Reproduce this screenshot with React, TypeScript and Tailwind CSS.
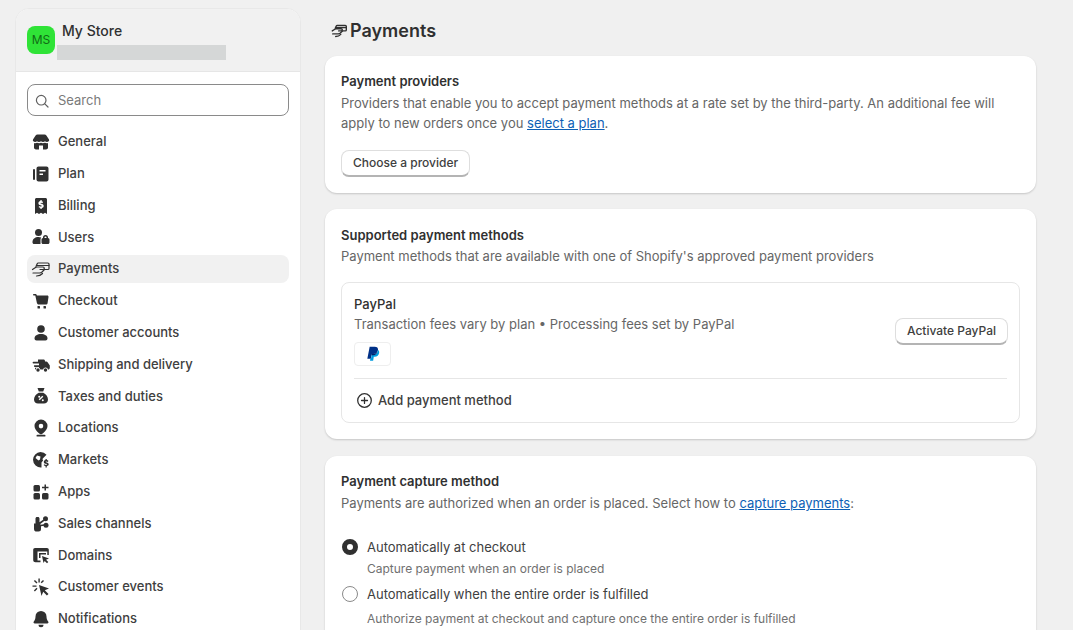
import React from "react";

const ico = "w-5 h-5 shrink-0 text-[#303030] fill-current";

function Store() {
  return (
    <svg viewBox="0 0 20 20" className={ico}>
      <path d="M6.500 2.500h7c.8 0 1.500.4 1.900 1.100L18 7.500c.3.600.2 1.300-.3 1.700-1 .9-2.600.9-3.700.1-1 .8-2.800.9-4 0-1.200.9-3 .8-4 0-1.100.8-2.700.8-3.700-.1-.5-.4-.6-1.100-.3-1.700l2.600-3.900c.4-.7 1.100-1.100 1.900-1.100Z" />
      <path fillRule="evenodd" d="M3 11c1 .3 2.100.2 3-.3 1.200.6 2.800.7 4 .1 1.200.6 2.800.5 4-.1.900.5 2 .6 3 .3v4.500c0 1.100-.9 2-2 2H5c-1.100 0-2-.9-2-2V11Zm5 2.500v4h4v-4H8Z" />
    </svg>
  );
}

function Plan() {
  return (
    <svg viewBox="0 0 20 20" className={ico}>
      <rect x="2" y="5" width="2" height="11" rx="1" />
      <path fillRule="evenodd" d="M7.500 2.500h8c1.100 0 2 .9 2 2v11c0 1.100-.9 2-2 2h-8c-1.100 0-2-.9-2-2v-11c0-1.100.9-2 2-2Zm1 3.500v1.500h6V6h-6Zm0 3.500V11h3.500V9.500H8.500Z" />
    </svg>
  );
}

function Billing() {
  return (
    <svg viewBox="0 0 20 20" className={ico}>
      <path fillRule="evenodd" d="M5.500 2h9C15.300 2 16 2.700 16 3.500V18l-2-1.300-2 1.300-2-1.300L8 18l-2-1.300L4 18V3.500C4 2.700 4.700 2 5.500 2Zm3.900 2v1C8.200 5.300 7.400 6.100 7.400 7.200c0 1.300 1 1.800 2.100 2.100.9.200 1.200.4 1.200.7 0 .4-.4.600-.8.600-.5 0-1-.2-1.400-.6l-1 1.100c.5.500 1.200.8 1.900 1v1h1.300v-1c1.200-.2 2-1 2-2.100 0-1.400-1.100-1.900-2.200-2.200-.8-.2-1.100-.3-1.100-.6 0-.3.300-.5.700-.5.400 0 .8.200 1.200.5l.9-1.100c-.5-.4-1-.7-1.500-.8V4H9.400Z" />
    </svg>
  );
}

function Users() {
  return (
    <svg viewBox="0 0 20 20" className={ico}>
      <circle cx="7.500" cy="5.500" r="3.500" />
      <path d="M1.500 15c0-3 2.500-5 6-5 1 0 1.900.2 2.700.5-.4.600-.7 1.300-.7 2.100V17H3c-.8 0-1.500-.7-1.500-1.500V15Z" />
      <path fillRule="evenodd" d="M12 11v-.5a2.500 2.500 0 0 1 5 0v.5c.8.100 1.500.8 1.500 1.700v2.800c0 .9-.7 1.500-1.500 1.500h-5c-.8 0-1.500-.6-1.500-1.500v-2.800c0-.9.700-1.600 1.500-1.700Zm1.500 0h2v-.5a1 1 0 0 0-2 0v.5Z" />
    </svg>
  );
}

function Payments({ className = "w-5 h-5 shrink-0 text-[#303030]", strokeWidth = 1.2 }: { className?: string; strokeWidth?: number }) {
  return (
    <svg viewBox="0 0 20 20" className={className} fill="none" stroke="currentColor" strokeWidth={strokeWidth} strokeLinecap="round" strokeLinejoin="round">
      <path d="M5 7.500 6.200 4.700c.2-.4.500-.7 1-.7h9.600c.7 0 1.200.5 1.200 1.100v4.300c0 .6-.5 1.100-1.200 1.100H14" />
      <path d="M6 6.500h12" />
      <path d="M1.500 10.500 4.500 8.500c.5-.3 1-.5 1.500-.5h6c.8 0 1.300.5 1.300 1.200s-.5 1.300-1.300 1.300H9" />
      <path d="M2 14h6.500c1 0 1.800-.4 2.500-1l2.500-2.500" />
      <path d="M5.500 17c2.500 0 4.500-.8 6-2.500" />
    </svg>
  );
}

function Cart() {
  return (
    <svg viewBox="0 0 20 20" className={ico}>
      <path d="M2.700 3h1.600c.7 0 1.300.500 1.500 1.100l.1.400h10.400c.8 0 1.300.700 1.200 1.400l-.9 6c-.1.900-.9 1.600-1.800 1.600H7.700c-.9 0-1.600-.6-1.800-1.500L4.300 4.500H2.700C2.300 4.500 2 4.200 2 3.700S2.300 3 2.700 3Z" />
      <rect x="6.500" y="15" width="2.500" height="2.500" rx=".6" />
      <rect x="12.500" y="15" width="2.500" height="2.500" rx=".6" />
    </svg>
  );
}

function Person() {
  return (
    <svg viewBox="0 0 20 20" className={ico}>
      <circle cx="10" cy="6" r="3.800" />
      <path d="M3.500 15.500c0-2.800 2.800-4.500 6.500-4.500s6.500 1.700 6.500 4.500c0 1.100-.9 2-2 2h-9c-1.100 0-2-.9-2-2Z" />
    </svg>
  );
}

function Truck() {
  return (
    <svg viewBox="0 0 20 20" className={ico}>
      <path d="M7 4.500h5.500c.8 0 1.500.7 1.500 1.500v.5h1.300c.5 0 1 .2 1.300.7l1.900 2.800c.2.200.3.500.3.800v2.200c0 .8-.7 1.500-1.500 1.500h-.3a2.500 2.500 0 0 0-4.900 0H9.400a2.500 2.500 0 0 0-4.900 0H4v-1.800h4V12H3.500a1 1 0 0 1 0-1.800H8V8.500H2.500a.9.900 0 0 1 0-1.800H7V4.500Z" />
      <circle cx="7" cy="15" r="1.700" />
      <circle cx="14.500" cy="15" r="1.700" />
    </svg>
  );
}

function Taxes() {
  return (
    <svg viewBox="0 0 20 20" className={ico}>
      <path fillRule="evenodd" d="M6.500 2h7l-1.300 3.500h-4.400L6.500 2Zm1.300 4.800h4.400C15 8 17 10.700 17 13.500c0 2.500-1.800 4-4 4H7c-2.200 0-4-1.500-4-4 0-2.800 2-5.500 4.800-6.700Zm3.500 2.900L7.700 13.300l1 1 3.600-3.600-1-1ZM8.200 9.800a1 1 0 1 0 0 2 1 1 0 0 0 0-2Zm3.600 3.400a1 1 0 1 0 0 2 1 1 0 0 0 0-2Z" />
    </svg>
  );
}

function Pin() {
  return (
    <svg viewBox="0 0 20 20" className={ico}>
      <path fillRule="evenodd" d="M10 1.500a6.500 6.500 0 0 1 6.500 6.500c0 2.700-2 5-4.200 7l-1.300 1c-.6.400-1.400.4-2 0l-1.300-1C5.500 13 3.500 10.700 3.500 8A6.500 6.500 0 0 1 10 1.500Zm0 4.300a2.300 2.300 0 1 0 0 4.600 2.300 2.300 0 0 0 0-4.600Z" />
      <rect x="5.500" y="16.800" width="9" height="1.700" rx=".85" />
    </svg>
  );
}

function Globe() {
  return (
    <svg viewBox="0 0 20 20" className={ico}>
      <path fillRule="evenodd" d="M9.500 2a8 8 0 0 1 6 2.700L12 8.200c-.5.400-.6 1-.3 1.600l.4.700-1.600 2.100v4.900A7.900 7.900 0 0 1 2 9.800 7.900 7.900 0 0 1 9.500 2ZM6 5.500 4.500 8l3 2.500 1.500-1 .5-3L6 5.500Z" />
      <path d="M14.500 9h1.300v1.100c.7.100 1.300.4 1.700.9l-.9.900c-.4-.3-.8-.5-1.300-.5-.4 0-.7.200-.7.400 0 .3.300.4 1.100.6 1.100.3 2 .7 2 1.900 0 1-.7 1.600-1.900 1.800V17.500h-1.300v-1.400c-.7-.1-1.400-.5-1.900-1l.9-.9c.4.400 1 .7 1.600.7.500 0 .8-.2.800-.500 0-.3-.3-.4-1.100-.6-1.100-.3-2-.7-2-1.900 0-1 .7-1.600 1.700-1.800V9Z" />
    </svg>
  );
}

function Apps() {
  return (
    <svg viewBox="0 0 20 20" className={ico}>
      <rect x="2.500" y="3" width="6.500" height="6.500" rx="1.500" />
      <rect x="2.500" y="11" width="6.500" height="6.500" rx="1.500" />
      <rect x="11" y="11" width="6.500" height="6.500" rx="1.500" />
      <path d="M13.500 2.500h1.500v2.300h2.500v1.500H15v2.200h-1.500V6.300H11V4.800h2.500V2.500Z" />
    </svg>
  );
}

function Channels() {
  return (
    <svg viewBox="0 0 20 20" className={ico}>
      <path d="M3 9.500h1.500V4.500C4.500 3.700 5.200 3 6 3h1c.8 0 1.500.7 1.500 1.500v3.700l4-2.800 1 1.300L9.300 10l.2.800 3.600-.5.200 1.500-3.300.5V15a2.500 2.500 0 0 1-2.500 2.500h-3A2.500 2.500 0 0 1 3 15V9.500Z" />
      <circle cx="14.500" cy="4.700" r="2.500" />
      <circle cx="15" cy="11.300" r="2.500" />
    </svg>
  );
}

function Domains() {
  return (
    <svg viewBox="0 0 20 20" className={ico}>
      <path d="M4 3h12c1 0 1.800.8 1.800 1.800V10h-1.500V6.500H6.500v9h3v1.800H4.500c-1.300 0-2.300-1-2.300-2.300V4.800C2.200 3.800 3 3 4 3Z" />
      <path d="M8 8h7v1.500H9.500V13H8V8Z" />
      <path d="m11 11 7 2.500-3 1.200 2.300 2.300-1.300 1.300-2.300-2.300L12.500 18 11 11Z" />
    </svg>
  );
}

function Events() {
  return (
    <svg viewBox="0 0 20 20" className={ico}>
      <path d="m8 8 10 3.500-4.200 1.700 3.700 3.700-1.600 1.600-3.700-3.700L10.500 19 8 8Z" />
      <path d="M7.400 1.500h1.400v4H7.400zM1.500 8.400h4v1.400h-4zM2.900 3.900l1-1 2.600 2.600-1 1zM5.500 10.800l1 1-2.600 2.600-1-1zM12 2.900l1 1L10.700 6.200l-1-1z" />
    </svg>
  );
}

function Bell() {
  return (
    <svg viewBox="0 0 20 20" className={ico}>
      <path d="M10 2a5.500 5.500 0 0 1 5.500 5.500c0 2.200.6 3.700 1.700 5 .7.900.2 2-1 2H3.800c-1.200 0-1.700-1.100-1-2 1.100-1.300 1.700-2.800 1.700-5A5.500 5.500 0 0 1 10 2Z" />
      <path d="M7.500 15.800h5a2.500 2.500 0 0 1-5 0Z" />
    </svg>
  );
}

const navItems = [
  { label: "General", icon: <Store /> },
  { label: "Plan", icon: <Plan /> },
  { label: "Billing", icon: <Billing /> },
  { label: "Users", icon: <Users /> },
  { label: "Payments", icon: <Payments />, active: true },
  { label: "Checkout", icon: <Cart /> },
  { label: "Customer accounts", icon: <Person /> },
  { label: "Shipping and delivery", icon: <Truck /> },
  { label: "Taxes and duties", icon: <Taxes /> },
  { label: "Locations", icon: <Pin /> },
  { label: "Markets", icon: <Globe /> },
  { label: "Apps", icon: <Apps /> },
  { label: "Sales channels", icon: <Channels /> },
  { label: "Domains", icon: <Domains /> },
  { label: "Customer events", icon: <Events /> },
  { label: "Notifications", icon: <Bell /> },
];

function Sidebar() {
  return (
    <aside className="w-[286px] h-[640px] mt-2 ml-[15px] shrink-0 bg-white rounded-t-[14px] border border-[#e8e8e8] overflow-hidden">
      {/* Store header */}
      <div className="h-[63px] bg-[#f1f1f1] border-b border-[#e6e6e6] pl-[11px] pt-[13px] flex">
        <div className="w-7 h-7 mt-[4px] rounded-lg bg-[#2fe337] text-[#116b16] text-[12px] flex items-center justify-center shrink-0">MS</div>
        <div className="ml-[7px] -mt-[1px]">
          <div className="text-[14px] leading-[20px] font-medium text-[#303030]">My Store</div>
          <div className="-ml-[5px] mt-[4px] w-[169px] h-[15px] bg-[#d5d7d7]" />
        </div>
      </div>
      <div className="px-[11px] pt-3">
        {/* Search */}
        <div className="h-8 rounded-lg border border-[#8a8a8a] flex items-center pl-[6px] gap-[8px] pt-[1px]">
          <svg viewBox="0 0 20 20" className="w-4 h-4 text-[#616161]" fill="none" stroke="currentColor" strokeWidth="1.500" strokeLinecap="round">
            <circle cx="9" cy="9" r="6" />
            <path d="m13.500 13.500 4 4" />
          </svg>
          <span className="text-[13px] text-[#7a7a7a]">Search</span>
        </div>
        <nav className="mt-[12px] flex flex-col gap-[3.800px]">
          {navItems.map((item) => (
            <div
              key={item.label}
              className={`h-[28px] rounded-lg flex items-center pl-[4px] gap-[7px] text-[13px] font-medium text-[#404040]${item.active ? " bg-[#f1f1f1]" : ""}`}
            >
              {item.icon}
              <span>{item.label}</span>
            </div>
          ))}
        </nav>
      </div>
    </aside>
  );
}

function Card({ className = "", children }: { className?: string; children: React.ReactNode }) {
  return (
    <section className={`bg-white rounded-xl shadow-[0_1px_2px_rgba(0,0,0,0.18)] px-4 ${className}`}>
      {children}
    </section>
  );
}

function Button({ children }: { children: React.ReactNode }) {
  return (
    <button className="h-[27px] px-[11px] rounded-lg bg-white border border-[#dedede] border-b-[#b4b4b4] border-b-2 text-[12px] font-medium text-[#404040]">
      {children}
    </button>
  );
}

function RadioOption({ checked, title, hint, hintClass }: { checked?: boolean; title: string; hint: string; hintClass: string }) {
  return (
    <div>
      <div className="flex items-center gap-[9px] pl-[1px] leading-[20px]">
        {checked ? (
          <span className="w-4 h-4 rounded-full border-[5px] border-[#303030] bg-white" />
        ) : (
          <span className="w-4 h-4 rounded-full border border-[#8a8a8a] bg-white" />
        )}
        <span className="text-[13px] text-[#404040]">{title}</span>
      </div>
      <div className={`ml-[26px] text-[12px] leading-[16px] text-[#707070] ${hintClass}`}>{hint}</div>
    </div>
  );
}

export default function App() {
  return (
    <div className="h-[630px] overflow-hidden bg-[#f0f0f0] flex font-['Inter',sans-serif]">
      <Sidebar />
      <main className="ml-6 w-[711px] shrink-0">
        <h1 className="mt-[17px] ml-[6px] h-[26px] flex items-center gap-[2px] text-[18px] font-semibold text-[#303030]">
          <Payments className="w-[17px] h-[17px] text-[#303030]" strokeWidth={1.600} />
          Payments
        </h1>

        <Card className="mt-[13px] h-[137px] pt-[15px]">
          <h2 className="text-[13px] leading-[20px] font-semibold text-[#303030]">Payment providers</h2>
          <p className="mt-[2px] text-[13px] leading-[20px] text-[#666666]">
            Providers that enable you to accept payment methods at a rate set by the third-party. An additional fee will
            <br />
            apply to new orders once you <a className="text-[#0e5fb5] underline">select a plan</a>.
          </p>
          <div className="mt-[16px]"><Button>Choose a provider</Button></div>
        </Card>

        <Card className="mt-4 h-[230px] pt-[16px]">
          <h2 className="text-[13px] leading-[20px] font-semibold text-[#303030]">Supported payment methods</h2>
          <p className="mt-[1px] text-[13px] leading-[20px] text-[#666666]">
            Payment methods that are available with one of Shopify's approved payment providers
          </p>
          <div className="mt-[16px] h-[141px] rounded-lg border border-[#e6e6e6] px-3 pt-[11px]">
            <div className="flex items-center justify-between">
              <div>
                <div className="text-[13px] leading-[20px] font-medium text-[#303030]">PayPal</div>
                <div className="text-[13px] leading-[20px] text-[#666666]">
                  Transaction fees vary by plan • Processing fees set by PayPal
                </div>
                <div className="mt-[8px] w-[37px] h-[24px] rounded border border-[#eeeeee] flex items-center justify-center">
                  <svg viewBox="0 0 20 24" className="w-[14px] h-[16px]">
                    <path fill="#003087" d="M5 1h7.500c3.500 0 5.500 1.700 5 5-.6 4-3.200 6-7 6H8l-1.200 7H1.500L5 1Z" />
                    <path fill="#009cde" d="M17.500 6c1.500 1 2 2.500 1.700 4.500-.6 3.500-3 5.500-6.500 5.500h-1.500l-1 6H5.500l.5-3h1l1-6h3c3.500 0 6-2.500 6.500-7Z" />
                    <path fill="#012169" d="M7.700 12h2.800c2.700 0 4.900-1 6.100-3.200-1 3.500-3 5.200-6.100 5.200H7.300l.4-2Z" />
                  </svg>
                </div>
              </div>
              <div className="mt-[2px] -mr-[1px]"><Button>Activate PayPal</Button></div>
            </div>
            <div className="mt-[12px] border-t border-[#e6e6e6] h-[44px] flex items-center pl-[2px] gap-[5px]">
              <svg viewBox="0 0 20 20" className="w-[17px] h-[17px] text-[#303030]" fill="none" stroke="currentColor" strokeWidth="1.500" strokeLinecap="round">
                <circle cx="10" cy="10" r="8" />
                <path d="M10 6.500v7M6.500 10h7" />
              </svg>
              <span className="text-[13px] font-medium text-[#404040]">Add payment method</span>
            </div>
          </div>
        </Card>

        <Card className="mt-[17px] h-[200px] pt-[15px]">
          <h2 className="text-[13px] leading-[20px] font-semibold text-[#303030]">Payment capture method</h2>
          <p className="mt-[2px] text-[13px] leading-[20px] text-[#666666]">
            Payments are authorized when an order is placed. Select how to{" "}
            <a className="text-[#0e5fb5] underline">capture payments</a>:
          </p>
          <div className="mt-[24px] flex flex-col gap-[7px]">
            <RadioOption checked title="Automatically at checkout" hint="Capture payment when an order is placed" hintClass="mt-[4px]" />
            <RadioOption title="Automatically when the entire order is fulfilled" hint="Authorize payment at checkout and capture once the entire order is fulfilled" hintClass="mt-[7px]" />
          </div>
        </Card>
      </main>
    </div>
  );
}
